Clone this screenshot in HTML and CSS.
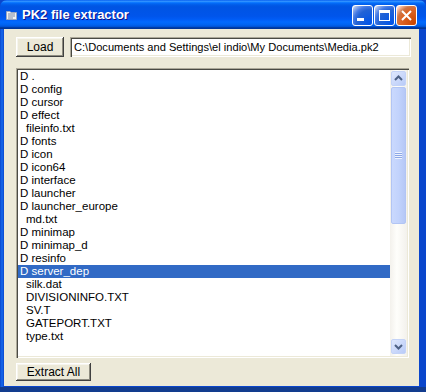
FILE: index.html
```html
<!DOCTYPE html>
<html>
<head>
<meta charset="utf-8">
<link rel="stylesheet" href="styles.css">
</head>
<body>
<div class="window">
  <div class="titlebar">
    <svg class="app-icon" width="11" height="10" viewBox="0 0 11 10">
      <path d="M0.5 1.5 H4 L5 2.5 H10.5 V9.5 H0.5 Z" fill="#f2f2f2" stroke="#9aa7c0" stroke-width="1"/>
      <path d="M2 4 H9 M2 6 H9 M2 8 H7" stroke="#7d8aa8" stroke-width="1"/>
    </svg>
    <span class="title">PK2 file extractor</span>
    <div class="controls">
      <div class="ctl"><svg width="21" height="21" viewBox="0 0 21 21"><rect x="5" y="13" width="7" height="3" fill="#fff"/></svg></div>
      <div class="ctl"><svg width="21" height="21" viewBox="0 0 21 21"><rect x="5.5" y="5.5" width="10" height="10" fill="none" stroke="#fff" stroke-width="1"/><rect x="5" y="5" width="11" height="3" fill="#fff"/></svg></div>
      <div class="ctl close"><svg width="21" height="21" viewBox="0 0 21 21"><path d="M6 6 L15 15 M15 6 L6 15" stroke="#fff" stroke-width="2"/></svg></div>
    </div>
  </div>
  <div class="frame">
    <div class="client">
      <div class="toprow">
        <div class="btn load">Load</div>
        <div class="field">C:\Documents and Settings\el indio\My Documents\Media.pk2</div>
      </div>
      <div class="listbox">
        <ul class="items">
          <li>D .</li>
          <li>D config</li>
          <li>D cursor</li>
          <li>D effect</li>
          <li class="file">fileinfo.txt</li>
          <li>D fonts</li>
          <li>D icon</li>
          <li>D icon64</li>
          <li>D interface</li>
          <li>D launcher</li>
          <li>D launcher_europe</li>
          <li class="file">md.txt</li>
          <li>D minimap</li>
          <li>D minimap_d</li>
          <li>D resinfo</li>
          <li class="sel">D server_dep</li>
          <li class="file">silk.dat</li>
          <li class="file">DIVISIONINFO.TXT</li>
          <li class="file">SV.T</li>
          <li class="file">GATEPORT.TXT</li>
          <li class="file">type.txt</li>
        </ul>
        <div class="vscroll">
          <div class="sbtn"><svg width="15" height="15" viewBox="0 0 15 15"><path d="M4 9 L7.5 5.5 L11 9" fill="none" stroke="#4d6185" stroke-width="2"/></svg></div>
          <div class="thumb"><span class="grip"></span></div>
          <div class="track"></div>
          <div class="sbtn"><svg width="15" height="15" viewBox="0 0 15 15"><path d="M4 6 L7.5 9.5 L11 6" fill="none" stroke="#4d6185" stroke-width="2"/></svg></div>
        </div>
      </div>
      <div class="btn extract">Extract All</div>
    </div>
  </div>
</div>
</body>
</html>
```

FILE: styles.css
```css
html, body {
  margin: 0;
  padding: 0;
  background: #ffffff;
}
.window {
  width: 426px;
  height: 392px;
  display: flex;
  flex-direction: column;
  font-family: "Liberation Sans", Arial, sans-serif;
  font-size: 11px;
  background: #0a46cc;
}
.titlebar {
  height: 29px;
  flex: none;
  display: flex;
  align-items: center;
  padding-left: 6px;
  background: linear-gradient(to bottom, #0058ee 0%, #3593ff 4%, #288eff 6%, #127dff 8%, #036ffc 10%, #0262ee 14%, #0057e5 20%, #0054e3 24%, #0055eb 56%, #005bf5 66%, #026afe 76%, #0062ef 86%, #0052d6 92%, #0040ab 94%, #003092 100%);
  border-radius: 7px 7px 0 0;
}
.app-icon {
  flex: none;
}
.title {
  font-family: "Liberation Sans", Arial, sans-serif;
  font-weight: bold;
  font-size: 13px;
  color: #ffffff;
  margin-left: 5px;
  text-shadow: 1px 1px 0 #0f1089;
  flex: 1;
}
.controls {
  display: flex;
  gap: 1px;
  margin-right: 9px;
  margin-top: 1px;
}
.ctl {
  width: 21px;
  height: 21px;
  box-sizing: border-box;
  border: 1px solid #ffffff;
  border-radius: 3px;
  background: radial-gradient(circle at 90% 90%, #0054e9 0%, #2263d5 55%, #4479e4 70%, #a3bbec 90%, #ffffff 100%);
  display: flex;
  align-items: center;
  justify-content: center;
  overflow: hidden;
}
.ctl svg {
  flex: none;
}
.ctl.close {
  background: radial-gradient(circle at 90% 90%, #cc4600 0%, #dc6527 55%, #cd7546 70%, #ffccb2 90%, #ffffff 100%);
}
.frame {
  flex: 1;
  display: flex;
  padding: 0 7px 6px 4px;
  background: linear-gradient(to right, #0a46cc 0px, #166aee 2px, #0a46cc 4px, #0a46cc 100%);
  box-shadow: inset 0 -5px 0 #123c8e;
}
.client {
  flex: 1;
  background: #ece9d8;
  padding: 8px 0 0 12px;
  display: flex;
  flex-direction: column;
  align-items: flex-start;
}
.toprow {
  display: flex;
  gap: 6px;
  height: 20px;
}
.btn {
  box-sizing: border-box;
  background: #ece9d8;
  box-shadow: inset -1px -1px #404040, inset 1px 1px #ffffff, inset -2px -2px #8e8c80, inset 2px 2px #f6f5ee;
  color: #000;
  display: flex;
  align-items: center;
  justify-content: center;
  font-size: 12px;
}
.btn.load {
  width: 48px;
  height: 20px;
}
.field {
  width: 341px;
  height: 20px;
  box-sizing: border-box;
  background: #ffffff;
  box-shadow: inset 1px 1px #aca899, inset 2px 2px #4a4a44, inset -1px -1px #ffffff, inset -2px -2px #ece9d8;
  padding: 3px 0 0 4px;
  font-size: 11.1px;
  line-height: 14px;
  white-space: nowrap;
  color: #000;
}
.listbox {
  margin-top: 11px;
  width: 393px;
  height: 290px;
  box-sizing: border-box;
  padding: 2px;
  background: #ffffff;
  box-shadow: inset 1px 1px #aca899, inset 2px 2px #4a4a44, inset -1px -1px #ffffff, inset -2px -2px #ece9d8;
  display: flex;
}
.items {
  list-style: none;
  margin: 0;
  padding: 0;
  flex: 1;
  overflow: hidden;
}
.items li {
  height: 13px;
  line-height: 13px;
  padding-left: 2px;
  white-space: nowrap;
  font-size: 11.5px;
  color: #000;
}
.items li.file {
  padding-left: 8px;
}
.items li.sel {
  background: #316ac5;
  color: #ffffff;
}
.vscroll {
  width: 17px;
  flex: none;
  display: flex;
  flex-direction: column;
  align-items: center;
  background: linear-gradient(to right, #f3f1ec, #fefefb 40%, #f3f1ec);
  padding: 1px 0 2px;
  box-sizing: border-box;
}
.sbtn {
  width: 15px;
  height: 15px;
  box-sizing: border-box;
  border: 1px solid #c4d3f7;
  border-radius: 2px;
  background: linear-gradient(to bottom right, #dfe8fd, #b9cbf8);
  display: flex;
  align-items: center;
  justify-content: center;
  flex: none;
}
.sbtn svg {
  margin: -1px;
}
.thumb {
  width: 15px;
  height: 137px;
  margin-top: 1px;
  box-sizing: border-box;
  border: 1px solid #b2c5f4;
  border-radius: 2px;
  background: linear-gradient(to right, #cad9fd, #c2d3fc 50%, #b6c8f6);
  display: flex;
  align-items: center;
  justify-content: center;
  flex: none;
}
.grip {
  width: 7px;
  height: 7px;
  background: repeating-linear-gradient(to bottom, #eef3fe 0px, #eef3fe 1px, #8ca7e6 1px, #8ca7e6 2px);
}
.track {
  flex: 1;
}
.btn.extract {
  margin-top: 5px;
  width: 75px;
  height: 18px;
}
```
